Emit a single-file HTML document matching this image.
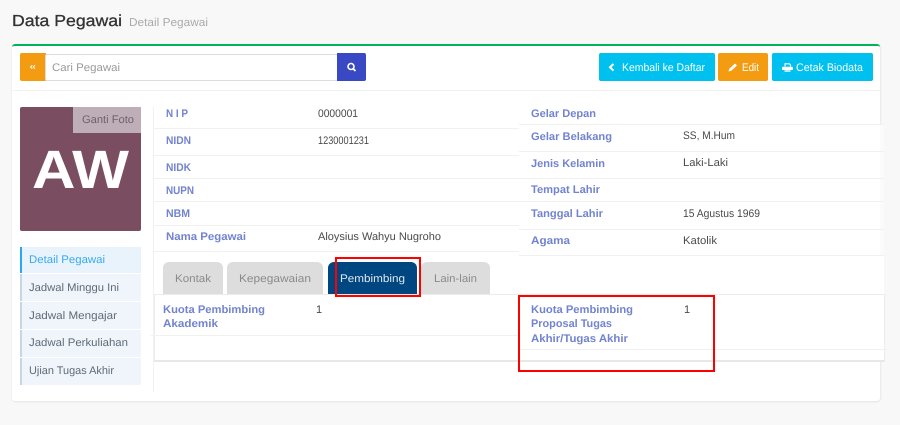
<!DOCTYPE html>
<html lang="id"><head><meta charset="utf-8"><title>Data Pegawai</title>
<style>
html,body{margin:0;padding:0;width:900px;height:425px;overflow:hidden;background:#f8f8f8}
div{position:absolute;box-sizing:border-box}
.hl{height:1px;background:#f1f1f1}
.side{left:20px;width:121px;background:#eff5fa;border-left:2px solid #c6d6e5}
.tab{top:262px;height:32px;background:#ddd;border-radius:6px 6px 0 0}
.btn{top:53px;height:28px;border-radius:2px}
svg{position:absolute;left:0;top:0}
text{font-family:"Liberation Sans",sans-serif;font-size:11px;fill:#555;white-space:pre;text-rendering:geometricPrecision}
.l{font-weight:bold;font-size:11px;fill:#7283d0}
.v{fill:#4a4a4a}
.s{fill:#5f6b76}
.w{fill:#fff}
.t{fill:#8a8a8a}
</style></head><body>
<div style="left:12px;top:44px;width:868px;height:357px;background:#fff;border-top:2px solid #00b35c;border-radius:3px;box-shadow:0 1px 2px rgba(0,0,0,.07),1px 0 2px rgba(0,0,0,.04)"></div>

<div style="left:20px;top:53px;width:26px;height:28px;background:#f39c12;border-radius:2px 0 0 2px"></div>
<div style="left:45px;top:54px;width:293px;height:27px;background:#fff;border:1px solid #ddd;border-radius:2px"></div>
<div style="left:337px;top:53px;width:29px;height:28px;background:#3949c4;border-radius:0 2px 2px 0"></div>
<div class="btn" style="left:599px;width:116px;background:#00c0ef"></div>
<div class="btn" style="left:718px;width:50px;background:#f39c12"></div>
<div class="btn" style="left:772px;width:101px;background:#00c0ef"></div>
<div class="hl" style="left:12px;top:90px;width:868px"></div>

<div style="left:20px;top:107px;width:121px;height:124px;background:#7a4d60;border-radius:2px"></div>
<div style="left:73px;top:107px;width:68px;height:26px;background:#bdaeb7"></div>
<div style="left:153px;top:107px;width:1px;height:285px;background:#f1f1f1"></div>

<div class="hl" style="left:154px;top:128px;width:365px"></div>
<div class="hl" style="left:154px;top:155px;width:365px"></div>
<div class="hl" style="left:154px;top:178px;width:365px"></div>
<div class="hl" style="left:154px;top:201px;width:365px"></div>
<div class="hl" style="left:154px;top:225px;width:365px"></div>
<div class="hl" style="left:154px;top:251px;width:365px"></div>
<div style="left:880px;top:124px;width:4px;height:170px;background:#fbfbfb"></div>
<div style="left:519px;top:255px;width:365px;height:39px;background:#fff"></div>
<div class="hl" style="left:519px;top:124px;width:365px"></div>
<div class="hl" style="left:519px;top:151px;width:365px"></div>
<div class="hl" style="left:519px;top:178px;width:365px"></div>
<div class="hl" style="left:519px;top:201px;width:365px"></div>
<div class="hl" style="left:519px;top:229px;width:365px"></div>
<div class="hl" style="left:519px;top:255px;width:365px"></div>

<div class="side" style="top:247px;height:26px;background:#e9f3fb;border-left-color:#2aa7f5"></div>
<div class="side" style="top:274px;height:27px"></div>
<div class="side" style="top:302px;height:27px"></div>
<div class="side" style="top:330px;height:27px"></div>
<div class="side" style="top:358px;height:27px"></div>

<div class="tab" style="left:163px;width:60px"></div>
<div class="tab" style="left:227px;width:96px"></div>
<div class="tab" style="left:328px;width:89px;background:#004680"></div>
<div class="tab" style="left:421px;width:69px"></div>

<div style="left:154px;top:294px;width:731px;height:68px;border:1px solid #ececec;border-bottom:2px solid #e8e8e8;background:#fff"></div>
<div class="hl" style="left:151px;top:335px;width:368px"></div>
<div class="hl" style="left:519px;top:349px;width:368px"></div>

<svg width="900" height="425" viewBox="0 0 900 425" style="filter:blur(.3px)">
<text x="12" y="26" textLength="110" lengthAdjust="spacingAndGlyphs" style="font-size:16px;fill:#333;stroke:#333;stroke-width:.3">Data Pegawai</text>
<text x="129" y="26" textLength="79" lengthAdjust="spacingAndGlyphs" style="font-size:11.5px;fill:#aaa">Detail Pegawai</text>

<text x="52" y="71" textLength="68" lengthAdjust="spacingAndGlyphs" style="fill:#999">Cari Pegawai</text>
<text x="622" y="71" textLength="83" lengthAdjust="spacingAndGlyphs" class="w">Kembali ke Daftar</text>
<text x="742" y="71" textLength="17" lengthAdjust="spacingAndGlyphs" class="w">Edit</text>
<text x="796" y="71" textLength="67" lengthAdjust="spacingAndGlyphs" class="w">Cetak Biodata</text>

<path d="M32.300 65.300L30.500 67l1.800 1.700M35 65.300L33.200 67l1.800 1.700" fill="none" stroke="#fff" stroke-width="1"/>
<circle cx="351" cy="66.500" r="3" fill="none" stroke="#fff" stroke-width="1.600"/><path d="M353.200 68.700L355.500 71" stroke="#fff" stroke-width="1.800"/>
<path d="M613.500 64L610 67.300L613.500 70.600" fill="none" stroke="#fff" stroke-width="2"/>
<path d="M728.500 71.500l.8-2.700 5.700-5.300 2 2-5.700 5.300z" fill="#fff"/>
<path d="M785 66.500v-2.700h4.500l1 1v1.700" fill="none" stroke="#fff" stroke-width="1.100"/><path d="M783 66.700h9a1 1 0 0 1 1 1v2.300h-11v-2.300a1 1 0 0 1 1-1z" fill="#fff"/><path d="M784.500 70.300h6v1.400h-6z" fill="#fff"/>

<text x="82" y="123" textLength="52" lengthAdjust="spacingAndGlyphs" style="fill:#6e6168">Ganti Foto</text>
<text x="32" y="188" textLength="97" lengthAdjust="spacingAndGlyphs" style="font-size:54px;font-weight:bold;fill:#fff">AW</text>

<text class="l" x="166" y="117" textLength="22" lengthAdjust="spacingAndGlyphs">N I P</text>
<text class="l" x="166" y="144" textLength="25" lengthAdjust="spacingAndGlyphs">NIDN</text>
<text class="l" x="166" y="171" textLength="25" lengthAdjust="spacingAndGlyphs">NIDK</text>
<text class="l" x="166" y="194" textLength="28" lengthAdjust="spacingAndGlyphs">NUPN</text>
<text class="l" x="166" y="217" textLength="24" lengthAdjust="spacingAndGlyphs">NBM</text>
<text class="l" x="166" y="240" textLength="80" lengthAdjust="spacingAndGlyphs">Nama Pegawai</text>
<text class="v" x="318" y="117" textLength="40" lengthAdjust="spacingAndGlyphs">0000001</text>
<text class="v" x="318" y="144" textLength="51" lengthAdjust="spacingAndGlyphs">1230001231</text>
<text class="v" x="318" y="240" textLength="123" lengthAdjust="spacingAndGlyphs">Aloysius Wahyu Nugroho</text>

<text class="l" x="531" y="117" textLength="65" lengthAdjust="spacingAndGlyphs">Gelar Depan</text>
<text class="l" x="531" y="140" textLength="81" lengthAdjust="spacingAndGlyphs">Gelar Belakang</text>
<text class="l" x="531" y="167" textLength="74" lengthAdjust="spacingAndGlyphs">Jenis Kelamin</text>
<text class="l" x="531" y="193" textLength="69" lengthAdjust="spacingAndGlyphs">Tempat Lahir</text>
<text class="l" x="531" y="217" textLength="72" lengthAdjust="spacingAndGlyphs">Tanggal Lahir</text>
<text class="l" x="531" y="244" textLength="39" lengthAdjust="spacingAndGlyphs">Agama</text>
<text class="v" x="683" y="139" textLength="52" lengthAdjust="spacingAndGlyphs">SS, M.Hum</text>
<text class="v" x="683" y="166" textLength="45" lengthAdjust="spacingAndGlyphs">Laki-Laki</text>
<text class="v" x="683" y="217" textLength="77" lengthAdjust="spacingAndGlyphs">15 Agustus 1969</text>
<text class="v" x="683" y="244" textLength="34" lengthAdjust="spacingAndGlyphs">Katolik</text>

<text x="29" y="263" textLength="76" lengthAdjust="spacingAndGlyphs" style="fill:#35a9f2">Detail Pegawai</text>
<text class="s" x="29" y="291" textLength="90" lengthAdjust="spacingAndGlyphs">Jadwal Minggu Ini</text>
<text class="s" x="29" y="319" textLength="88" lengthAdjust="spacingAndGlyphs">Jadwal Mengajar</text>
<text class="s" x="29" y="346" textLength="99" lengthAdjust="spacingAndGlyphs">Jadwal Perkuliahan</text>
<text class="s" x="29" y="374" textLength="85" lengthAdjust="spacingAndGlyphs">Ujian Tugas Akhir</text>

<text class="t" x="175" y="282" textLength="36" lengthAdjust="spacingAndGlyphs">Kontak</text>
<text class="t" x="239" y="282" textLength="72" lengthAdjust="spacingAndGlyphs">Kepegawaian</text>
<text x="340" y="282" textLength="65" lengthAdjust="spacingAndGlyphs" style="fill:#dfe8f0">Pembimbing</text>
<text class="t" x="434" y="282" textLength="43" lengthAdjust="spacingAndGlyphs">Lain-lain</text>

<text class="l" x="163" y="313" textLength="102" lengthAdjust="spacingAndGlyphs">Kuota Pembimbing</text>
<text class="l" x="163" y="327" textLength="55" lengthAdjust="spacingAndGlyphs">Akademik</text>
<text class="v" x="316" y="313">1</text>
<text class="l" x="531" y="313" textLength="102" lengthAdjust="spacingAndGlyphs">Kuota Pembimbing</text>
<text class="l" x="531" y="327" textLength="81" lengthAdjust="spacingAndGlyphs">Proposal Tugas</text>
<text class="l" x="531" y="342" textLength="97" lengthAdjust="spacingAndGlyphs">Akhir/Tugas Akhir</text>
<text class="v" x="684" y="313">1</text>
</svg>

<div style="left:335px;top:257px;width:86px;height:40px;border:2px solid #f00"></div>
<div style="left:518px;top:295px;width:197px;height:77px;border:2px solid #f00"></div>
</body></html>
